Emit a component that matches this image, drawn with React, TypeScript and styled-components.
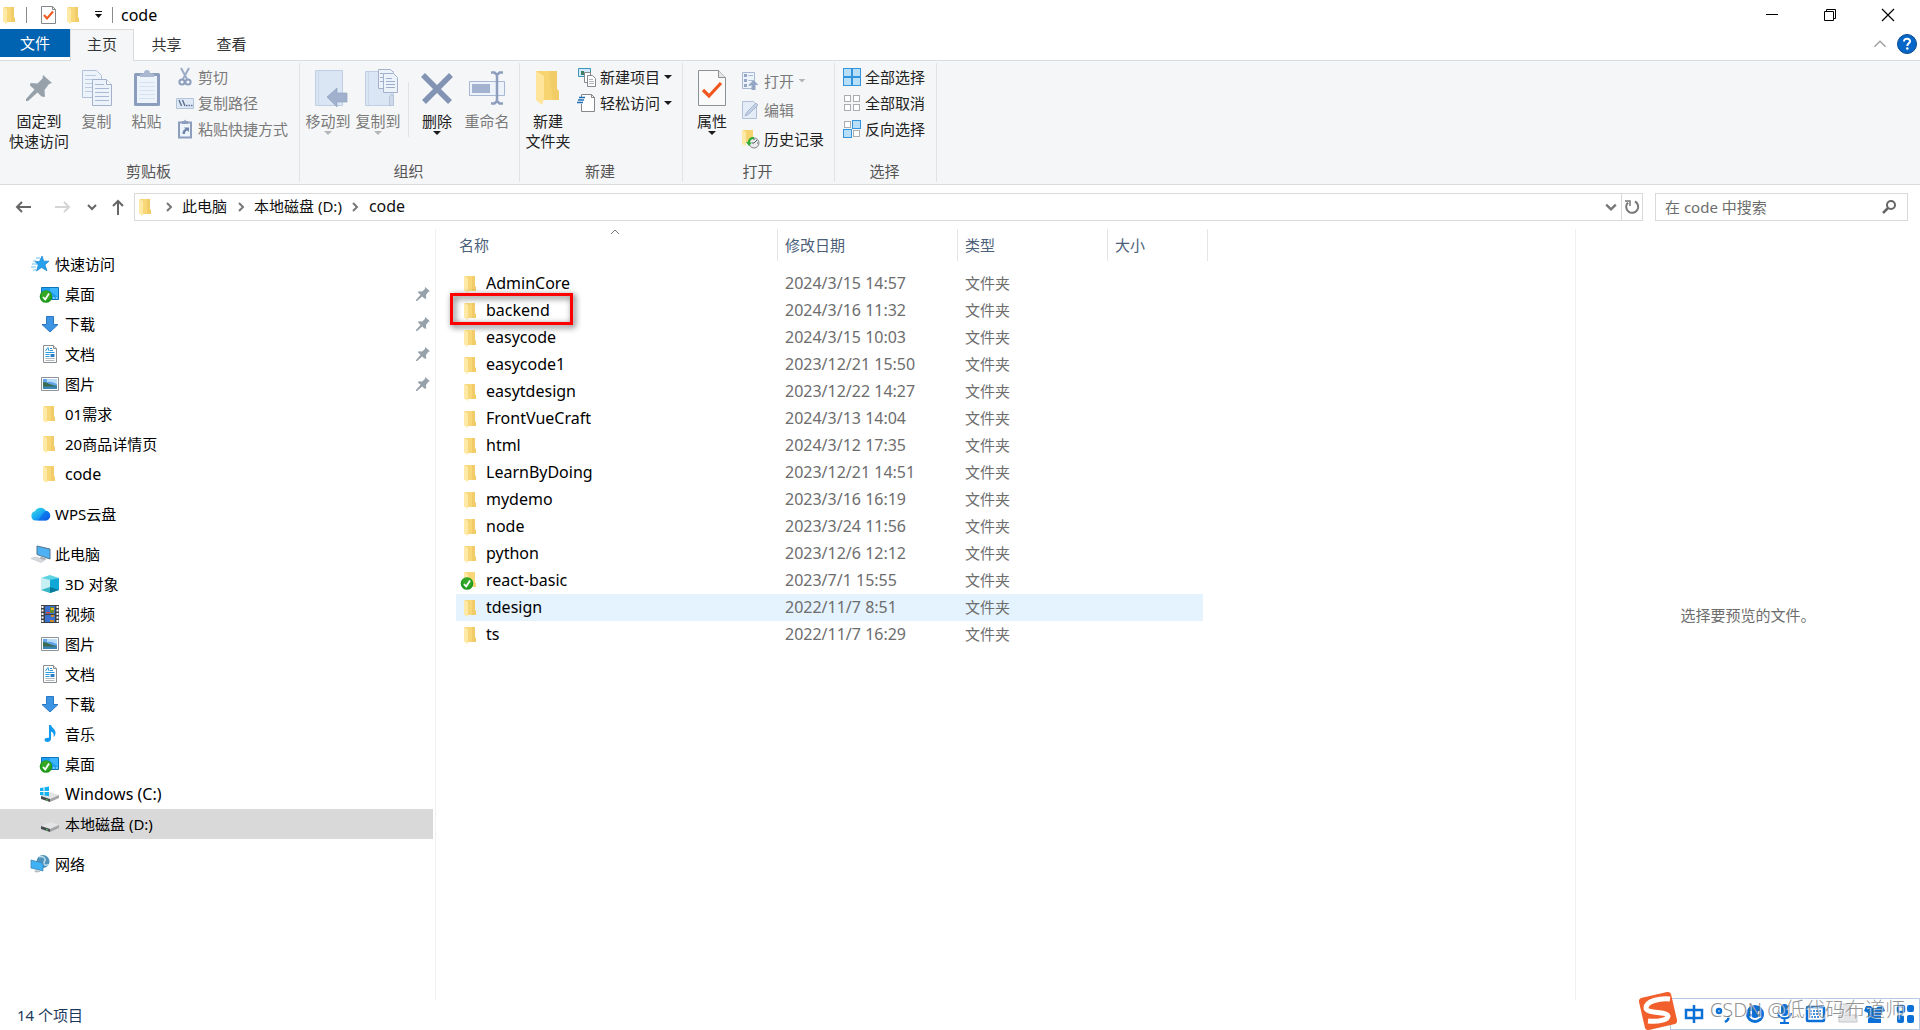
import React from "react";
import styled, { createGlobalStyle, css } from "styled-components";

const GlobalStyle = createGlobalStyle`
  * { box-sizing: border-box; }
  body {
    margin: 0;
    background: #fff;
    color: #000;
    font: 15px/20px "Noto Sans", "Noto Sans CJK SC", sans-serif;
  }
  button, input {
    font: inherit;
    color: inherit;
    margin: 0;
    padding: 0;
    border: 0;
    background: none;
  }
  svg { display: block; flex: none; overflow: visible; }
`;

/* ---------- icons ---------- */

type IconProps = { w?: number; h?: number };

const FolderIcon = () => (
  <svg width="18" height="18" viewBox="0 0 18 18">
    <path d="M3 1h10v10l1 1.500v3.500H5z" fill="#f8d779" />
    <path d="M10 1h3v10l1 1.500V16H10z" fill="#f2cc68" />
    <path d="M2 1l4 2v15L2 15.500z" fill="#ffe9a6" />
  </svg>
);

const CheckBadge = () => (
  <g>
    <circle cx="5" cy="11.500" r="6.300" fill="#1f9a1c" />
    <circle cx="5" cy="10.500" r="4.800" fill="#43b02f" opacity="0.600" />
    <path d="M2 12l2.200 2.600L8 8.500" fill="none" stroke="#fff" strokeWidth="1.800" />
  </g>
);

const SyncedFolderIcon = () => (
  <svg width="18" height="18" viewBox="0 0 18 18">
    <path d="M3 0h10v10l1 1.500V15H5z" fill="#f8d779" />
    <path d="M2 0l4 2v15L2 14.500z" fill="#ffe9a6" />
    <CheckBadge />
  </svg>
);

const DesktopIcon = () => (
  <svg width="18" height="18" viewBox="0 0 18 18">
    <path d="M.5 2.500h17v12H.5z" fill="#1e9df1" stroke="#0a74bd" />
    <path d="M9 3h8v9L9 6z" fill="#3db4ff" />
    <path d="M12 13h1.500M15 13h1.500" stroke="#fff" />
    <CheckBadge />
  </svg>
);

const DownloadIcon = () => (
  <svg width="18" height="18" viewBox="0 0 18 18">
    <path d="M5.500 1.500h7v8H17L9 17 1 9.500h4.500z" fill="#3d94e3" stroke="#2a78c4" />
  </svg>
);

const DocumentIcon = () => (
  <svg width="18" height="18" viewBox="0 0 18 18">
    <path d="M2.500.5h10l3 3v14h-13z" fill="#fff" stroke="#8b8f93" />
    <path d="M12.500.5v3h3" fill="#ddd" stroke="#8b8f93" />
    <path d="M4.500 6L7 2.500 8 6M9 3.500h2M9 5.500h3M4.500 7.500h9M4.500 9.500h4M4.500 11.500h4" fill="none" stroke="#2a98dc" />
    <path d="M9.500 9h4v3h-4z" fill="#2b7ec4" />
    <path d="M4.500 13.500h9M4.500 15.500h9" stroke="#b2b7bb" />
  </svg>
);

const PictureIcon = () => (
  <svg width="18" height="18" viewBox="0 0 18 18">
    <path d="M.5 2.500h17v13H.5z" fill="#fff" stroke="#8c9298" />
    <path d="M2 4h14v10H2z" fill="#5fa3ea" />
    <path d="M6 4h10v5c-4-1-5-3-10-2z" fill="#b8dcf7" />
    <path d="M2 7c4 0 7 3 14 4v1H2z" fill="#3d6b4f" />
    <path d="M2 11.500h14V14H2z" fill="#3a86b8" />
  </svg>
);

const StarIcon = () => (
  <svg width="18" height="18" viewBox="0 0 18 18">
    <path d="M11 1l1.800 5.200h5.200l-4 3.600 2 6L10.500 12.500 5.500 16l1.800-6L4 6.500h4.500z" fill="#27a1ee" stroke="#1682cc" strokeWidth="0.700" />
    <path d="M5 3h4M2 6h3M1 9h5M0 12h5M2 15h3" stroke="#6fc0f2" />
  </svg>
);

const CloudIcon = () => (
  <svg width="18" height="18" viewBox="0 0 18 18">
    <defs>
      <linearGradient id="cloudFill" x1="0" x2="1" y1="0" y2="1">
        <stop offset="0" stopColor="#3fe0d8" />
        <stop offset="0.500" stopColor="#18a8f5" />
        <stop offset="1" stopColor="#0a4fe0" />
      </linearGradient>
    </defs>
    <path d="M4.500 15.500a4.700 4.700 0 0 1-.6-9.200A6 6 0 0 1 14.500 5.500a5 5 0 0 1-.5 10z" fill="url(#cloudFill)" />
    <path d="M7 15.500c2-2 4-7 8-9.500a4.800 4.800 0 0 1-1 9.500z" fill="#0b62e6" opacity="0.600" />
  </svg>
);

const ComputerIcon = () => (
  <svg width="18" height="18" viewBox="0 0 18 18">
    <path d="M6 1l13 3v10L6 9.500z" fill="#4db1f3" stroke="#53758c" />
    <path d="M10 12l6 2-3 1-5-1.500z" fill="#9aa3ab" />
    <path d="M0 13.500l5-1.500 9 3-4 2.500z" fill="#d4d9dd" stroke="#b5bbc0" strokeWidth="0.500" />
  </svg>
);

const CubeIcon = () => (
  <svg width="18" height="18" viewBox="0 0 18 18">
    <path d="M9 0l9 3-9 3-9-3z" fill="#5fd3e2" />
    <path d="M0 3l9 2v13l-9-3z" fill="#c6f0f4" />
    <path d="M18 3L9 5v13l9-3z" fill="#0fa6d8" />
    <path d="M0 15l9-3v6z" fill="#3ab7c6" />
    <path d="M18 15l-9-3v6z" fill="#067a9b" />
  </svg>
);

const VideoIcon = () => (
  <svg width="18" height="18" viewBox="0 0 18 18">
    <path d="M0 0h18v18H0z" fill="#3d4043" />
    <path d="M1.500 1v17M16.500 1v17" stroke="#fff" strokeWidth="2" strokeDasharray="2 1.500" />
    <path d="M4 1h10v8H4zM4 10h10v7H4z" fill="#3a70cf" />
    <path d="M9 2h4v6H9z" fill="#6b8a2b" />
    <path d="M10 3h3v2h-3z" fill="#f1b52b" />
    <path d="M5 7h4v1.500H5z" fill="#d64a2f" />
    <path d="M10 10h3v2h-3zM9 15h4v2H9z" fill="#c98a2e" />
  </svg>
);

const MusicIcon = () => (
  <svg width="18" height="18" viewBox="0 0 18 18">
    <path d="M8 0h2c.5 3 5 4 4.500 8.500-.2 1.500-1 2.500-2 3.500.8-3-.5-5-2.500-5.500v7.500c0 2-2 3-3.800 3-1.700 0-2.700-1-2.700-2.200C3.500 13.500 5.500 12.500 8 12.800z" fill="#0f9af0" />
  </svg>
);

const DriveShape = () => (
  <g>
    <path d="M0 11l9-4 9 3-9 4z" fill="#e3e4e6" />
    <path d="M0 11l9 3v3l-9-3z" fill="#4a4d4f" />
    <path d="M9 14l9-4v3l-9 4z" fill="#a3a5a8" />
    <path d="M5 14l2 .7v1l-2-.7z" fill="#4fd05a" />
  </g>
);

const DriveIcon = () => (
  <svg width="18" height="18" viewBox="0 0 18 18">
    <DriveShape />
  </svg>
);

const SystemDriveIcon = () => (
  <svg width="18" height="18" viewBox="0 0 18 18">
    <DriveShape />
    <path d="M-1 3l3.500-.5V6H-1zM3.500 2.300L8 1.500V6H3.500zM-1 7h3.500v3.500L-1 10zM3.500 7H8v4.300l-4.500-.7z" fill="#16b1ef" />
  </svg>
);

const NetworkIcon = () => (
  <svg width="18" height="18" viewBox="0 0 18 18">
    <circle cx="12" cy="6.500" r="6.500" fill="#4f93ba" />
    <path d="M8 2c3-1 5 0 6 2s-2 3-1 5 4 1 4.500 0" fill="none" stroke="#bfe0ee" strokeWidth="1.500" />
    <path d="M0 5l12 3v8L0 13z" fill="#3fb1f5" stroke="#3a7ca8" strokeWidth="0.700" />
    <path d="M5 15l4 1v1l-4 .5-2-1z" fill="#b9c0c6" />
  </svg>
);

const PinIcon = ({ w = 14 }: IconProps) => (
  <svg width={w} height={w} viewBox="0 0 26 26">
    <path d="M17 0l9 8-3 1-4.500 6 .5 7-3.500-.5-4-4L2 26H0v-2l8.500-9.500L4 10.500 4.500 8l7 .5 5-5z" fill="#97a1aa" />
  </svg>
);

const PropertiesSmallIcon = () => (
  <svg width="16" height="18" viewBox="0 0 16 18">
    <path d="M.5.5h11l3 3v14H.5z" fill="#fff" stroke="#84888c" />
    <path d="M11.500.5v3h3" fill="none" stroke="#84888c" />
    <path d="M3 9l3 3.500L12 5.500" fill="none" stroke="#f0561d" strokeWidth="2" />
  </svg>
);

const CopyIcon = () => (
  <svg width="30" height="36" viewBox="0 0 30 36">
    <path d="M.5.5h14l5 5v22H.5z" fill="#edf3fb" stroke="#b1bfd8" />
    <path d="M3 5.500h11M3 9.500h14M3 13.500h7M3 17.500h7M3 21.500h7" stroke="#bccbe2" />
    <path d="M10.500 9.500h14l5 5v21h-19z" fill="#edf3fb" stroke="#a3b1cc" />
    <path d="M24.500 9.500v5h5" fill="#fff" stroke="#a3b1cc" />
    <path d="M13 14.500h9M13 18.500h14M13 22.500h14M13 26.500h14M13 30.500h14" stroke="#a9b9d4" />
  </svg>
);

const PasteIcon = () => (
  <svg width="26" height="38" viewBox="0 0 26 38">
    <rect x="0" y="4" width="26" height="33" rx="1.500" fill="#8d9dbd" />
    <path d="M3 7h20v27H3z" fill="#edf3fb" />
    <path d="M5 13.500h16M5 17.500h16M5 21.500h16M5 25.500h16M5 29.500h16" stroke="#d5e0f0" />
    <path d="M6 5l4-1a3 3 0 0 1 6 0l4 1v3H6z" fill="#a9b7d0" />
  </svg>
);

const CutIcon = () => (
  <svg width="18" height="18" viewBox="0 0 18 18">
    <path d="M5 0l6 11M13 0L7 11" stroke="#9aabc8" strokeWidth="2" />
    <circle cx="6" cy="14" r="2.600" fill="none" stroke="#8c9dbd" strokeWidth="2" />
    <circle cx="12" cy="14" r="2.600" fill="none" stroke="#8c9dbd" strokeWidth="2" />
  </svg>
);

const PathIcon = () => (
  <svg width="18" height="18" viewBox="0 0 18 18">
    <path d="M.5 4.500h17v10H.5z" fill="#dfe9f6" stroke="#b4c3dc" />
    <path d="M3 6l2.500 6M6.500 6L9 12" stroke="#5c6f92" strokeWidth="1.400" />
    <path d="M10 11.500h1.500M12.500 11.500H14M15 11.500h1.500" stroke="#5c6f92" strokeWidth="1.500" />
  </svg>
);

const PasteShortcutIcon = () => (
  <svg width="18" height="18" viewBox="0 0 18 18">
    <path d="M3 2.500h12v15H3z" fill="#edf3fb" stroke="#8d9dbd" strokeWidth="2" />
    <path d="M6 1h2l1-1.500L10 1h2v3H6z" fill="#8d9dbd" />
    <path d="M6.500 14c0-3 1-4.500 3-5L8 7.500h5V12l-1.500-1.500c-2 .5-2.500 1.500-2.500 3.500z" fill="#7186ad" />
  </svg>
);

const MoveToIcon = () => (
  <svg width="42" height="38" viewBox="-8 0 42 38">
    <path d="M.5 1.500h27v35H.5z" fill="#dbe6f4" stroke="#c0cee3" />
    <path d="M3.500 2v34" stroke="#cbd8ea" />
    <path d="M12 28l10-9v5h10v9H22v5z" fill="#a0b0cd" stroke="#92a3c3" strokeWidth="0.700" />
  </svg>
);

const CopyToIcon = () => (
  <svg width="42" height="38" viewBox="-8 0 42 38">
    <path d="M.5 2.500h28v34H.5z" fill="#dbe6f4" stroke="#c0cee3" />
    <path d="M3.500 3v33" stroke="#cbd8ea" />
    <path d="M13.500.5h12l3 3v16h-15z" fill="#edf3fb" stroke="#a3b1cc" />
    <path d="M18.500 4.500h10l4 4v15h-14z" fill="#edf3fb" stroke="#a3b1cc" />
    <path d="M21 9.500h6M21 12.500h9M21 15.500h9M21 18.500h9M15 4.500h3M15 8.500h3M15 12.500h3" stroke="#9dadca" />
    <path d="M24.500 28l2-3 2 3v8.500h-4z" fill="#cfdbeb" stroke="#b4c3dc" />
  </svg>
);

const DeleteIcon = () => (
  <svg width="32" height="32" viewBox="0 0 32 32">
    <path d="M2 3L29 30M30 3L3 30" stroke="#8293b4" strokeWidth="5.500" />
  </svg>
);

const RenameIcon = () => (
  <svg width="36" height="34" viewBox="0 0 36 34">
    <path d="M.5 10.500h35v14H.5z" fill="#edf3fb" stroke="#a9b8d2" />
    <path d="M3 13h18v9H3z" fill="#a3b2ce" />
    <path d="M22 1.500h3.500l2.500 2.500 2.500-2.500H34M28 3v28M22 32.500h3.500l2.500-2.500 2.500 2.500H34" fill="none" stroke="#8d9dbd" strokeWidth="2.500" />
  </svg>
);

const NewFolderIcon = () => (
  <svg width="26" height="36" viewBox="0 0 26 36">
    <path d="M1 1h21v18l2 2v9H6z" fill="#f7d470" />
    <path d="M14 1h8v18l2 2v9h-6z" fill="#edc45c" opacity="0.500" />
    <path d="M1 1l8 5v23l-2 6-6-5z" fill="#ffe49b" />
  </svg>
);

const NewItemIcon = () => (
  <svg width="18" height="18" viewBox="0 0 18 18">
    <path d="M.5.5h12v8H.5z" fill="#cfeafa" stroke="#3f93bf" />
    <path d="M3 3h3v4H3z" fill="#3f7f68" />
    <path d="M6.500 4.500h6v10h-6z" fill="#fff" stroke="#85898d" />
    <path d="M9.500 7.500h5l3 3v8h-8z" fill="#fff" stroke="#85898d" />
    <path d="M11 11.500h4M11 13.500h5M11 15.500h5" stroke="#b0b5ba" />
  </svg>
);

const EasyAccessIcon = () => (
  <svg width="18" height="18" viewBox="0 0 18 18">
    <path d="M3.500 3V.5h10l3 3v14h-13V10" fill="#fff" stroke="#85898d" />
    <path d="M13.500.5v3h3" fill="none" stroke="#85898d" />
    <path d="M1 3.500h6M0 6h6M-1 8.500h6" stroke="#1f6fb5" strokeWidth="1.500" />
  </svg>
);

const PropertiesIcon = () => (
  <svg width="28" height="36" viewBox="0 0 28 36">
    <path d="M.5.5h20l7 7v28H.5z" fill="#fafafa" stroke="#8d9195" />
    <path d="M20.500.5v7h7" fill="#e6e6e6" stroke="#8d9195" />
    <path d="M5 20l6 6L23 13" fill="none" stroke="#f0561d" strokeWidth="3.200" />
  </svg>
);

const OpenIcon = () => (
  <svg width="18" height="18" viewBox="0 0 18 18">
    <path d="M.5.500h12v16H.5z" fill="#edf3fb" stroke="#a9b8d2" />
    <path d="M2 2h3v3H2zM2 7h3v3H2zM2 12h3v3H2z" fill="#94a5c5" />
    <path d="M6.500 3.500H11M6.500 8.500H11M6.500 13.500H9" stroke="#a9b8d2" />
    <path d="M6.500 13L11.500 8l5 5h-3v5h-4v-5z" fill="#94a5c5" />
  </svg>
);

const EditIcon = () => (
  <svg width="18" height="18" viewBox="0 0 18 18">
    <path d="M.5.5h11l3 3v14H.5z" fill="#e4ecf7" stroke="#b1bfd8" />
    <path d="M3 15l2-4 9-9 2 2-9 9z" fill="#c3d0e4" stroke="#94a5c5" strokeWidth="0.700" />
  </svg>
);

const HistoryIcon = () => (
  <svg width="18" height="18" viewBox="0 0 18 18">
    <path d="M1 0h10v12H3z" fill="#f7d470" />
    <path d="M0 0l4 2v14l-4-2z" fill="#ffe9a6" />
    <circle cx="12" cy="13" r="5" fill="#e8eaec" stroke="#7f8488" />
    <path d="M12 13l3-3M12 13h-2M12 9v1M16 13h-1" stroke="#55595d" />
    <path d="M12 7c-4 0-6 2-6 5H4l3 4 3-3.500H8C8 10 9.500 9 12 9z" fill="#2faa35" />
  </svg>
);

const Tiles = ({ on }: { on: boolean[] }) => (
  <svg width="18" height="18" viewBox="0 0 18 18">
    {on.map((lit, i) => {
      const x = (i % 2) * 9;
      const y = Math.floor(i / 2) * 9;
      return lit ? (
        <rect key={i} x={x + 0.5} y={y + 0.5} width="8" height="8" fill="#b8dffa" stroke="#3294dc" />
      ) : (
        <rect key={i} x={x + 1.5} y={y + 1.5} width="6" height="6" fill="#fff" stroke="#a9adb1" />
      );
    })}
  </svg>
);

const Chevron = ({ dir, w = 10, color = "#777", weight = 2 }: { dir: "right" | "down" | "up"; w?: number; color?: string; weight?: number }) => {
  const shapes = { right: "M3 1l4 4-4 4", down: "M1 3l4 4 4-4", up: "M1 7l4-4 4 4" };
  return (
    <svg width={w} height={w} viewBox="0 0 10 10">
      <path d={shapes[dir]} fill="none" stroke={color} strokeWidth={weight} />
    </svg>
  );
};

const Arrow = ({ dir, color }: { dir: "left" | "right" | "up"; color: string }) => {
  const shapes = {
    left: "M16 8H2M7 3L2 8l5 5",
    right: "M0 8h14M9 3l5 5-5 5",
    up: "M8 16V2M3 7l5-5 5 5",
  };
  return (
    <svg width="16" height="16" viewBox="0 0 16 16">
      <path d={shapes[dir]} fill="none" stroke={color} strokeWidth="2" />
    </svg>
  );
};

/* ---------- shared pieces ---------- */

const Window = styled.div`
  display: flex;
  flex-direction: column;
  min-height: 100vh;
  position: relative;
`;

const Caret = styled.span<{ $dim?: boolean }>`
  width: 8px;
  height: 4px;
  background: ${(p) => (p.$dim ? "#b4b6b8" : "#1a1a1a")};
  clip-path: polygon(0 0, 100% 0, 50% 100%);
`;

/* ---------- title bar ---------- */

const TitleBar = styled.header`
  display: flex;
  align-items: center;
  height: 29px;
  padding-left: 1px;
`;

const QuickTools = styled.div`
  display: flex;
  align-items: center;
  gap: 7px;
`;

const ToolButton = styled.button<{ $w: number }>`
  display: flex;
  justify-content: center;
  align-items: center;
  width: ${(p) => p.$w}px;
  height: 20px;
`;

const TitleRule = styled.span`
  width: 1px;
  height: 16px;
  background: #8c8c8c;
`;

const WindowTitle = styled.h1`
  flex: 1;
  margin: 0;
  padding-left: 8px;
  font-size: 16px;
  font-weight: 400;
  line-height: 24px;
`;

const WindowButtons = styled.div`
  display: flex;
  padding-right: 3px;
`;

const WindowButton = styled.button`
  display: flex;
  justify-content: center;
  align-items: center;
  width: 58px;
  height: 28px;
`;

/* ---------- ribbon ---------- */

const Tabs = styled.nav`
  display: flex;
  height: 32px;
  border-bottom: 1px solid #dadbdc;
`;

const Tab = styled.button<{ $kind?: "file" | "active" }>`
  width: 65px;
  height: 29px;
  color: #333;
  ${(p) =>
    p.$kind === "file" &&
    css`
      width: 70px;
      height: 28px;
      background: #0063b1;
      color: #fff;
    `}
  ${(p) =>
    p.$kind === "active" &&
    css`
      width: 64px;
      height: 32px;
      padding-bottom: 3px;
      background: #f5f6f7;
      border: 1px solid #dadbdc;
      border-bottom: 0;
    `}
`;

const TabsEnd = styled.div`
  display: flex;
  align-items: center;
  gap: 10px;
  margin-left: auto;
  padding: 0 3px 1px 0;
`;

const RibbonBar = styled.section`
  display: flex;
  height: 124px;
  background: #f5f6f7;
  border-bottom: 1px solid #dadbdc;
  color: #333;
`;

const Group = styled.div<{ $pad: number; $w: number }>`
  display: flex;
  flex-direction: column;
  justify-content: space-between;
  width: ${(p) => p.$w}px;
  margin: 2px 0;
  padding: 1px 0 1px ${(p) => p.$pad}px;
  border-right: 1px solid #e2e3e4;
`;

const GroupBody = styled.div`
  display: flex;
`;

const GroupName = styled.div<{ $pad: number }>`
  margin-left: -${(p) => p.$pad}px;
  padding-right: 2px;
  text-align: center;
  color: #555;
`;

const BigButton = styled.button<{ $w: number }>`
  display: flex;
  flex-direction: column;
  align-items: center;
  width: ${(p) => p.$w}px;
  white-space: nowrap;
  color: #222;
  &:disabled { color: #7a7a7a; }
`;

const BigIcon = styled.span`
  display: flex;
  align-items: center;
  height: 47px;
`;

const SmallColumn = styled.div<{ $pad: number; $row: number; $top?: number }>`
  display: grid;
  grid-auto-rows: ${(p) => p.$row}px;
  align-content: start;
  padding: ${(p) => p.$top ?? 0}px 0 0 ${(p) => p.$pad}px;
`;

const SmallButton = styled.button`
  display: flex;
  align-items: center;
  gap: 4px;
  color: #222;
  white-space: nowrap;
  &:disabled { color: #7a7a7a; }
`;

const InnerRule = styled.span`
  width: 1px;
  height: 55px;
  margin: 18px 5px 0;
  background: #e2e3e4;
`;

type BigProps = { w: number; icon: React.ReactNode; lines: string[]; off?: boolean; caret?: boolean };

const Big = ({ w, icon, lines, off, caret }: BigProps) => (
  <BigButton $w={w} disabled={off}>
    <BigIcon>{icon}</BigIcon>
    {lines.map((l) => (
      <span key={l}>{l}</span>
    ))}
    {caret && <Caret $dim={off} />}
  </BigButton>
);

type SmallProps = { icon: React.ReactNode; label: string; off?: boolean; caret?: boolean };

const Small = ({ icon, label, off, caret }: SmallProps) => (
  <SmallButton disabled={off}>
    {icon}
    <span>{label}</span>
    {caret && <Caret $dim={off} />}
  </SmallButton>
);

const RibbonGroup = ({ name, pad, w, children }: { name: string; pad: number; w: number; children: React.ReactNode }) => (
  <Group $pad={pad} $w={w}>
    <GroupBody>{children}</GroupBody>
    <GroupName $pad={pad}>{name}</GroupName>
  </Group>
);

/* ---------- address row ---------- */

const NavRow = styled.div`
  display: flex;
  align-items: center;
  height: 44px;
  padding: 0 12px 1px 15px;
`;

const NavButtons = styled.div`
  display: grid;
  grid-template-columns: 40px 32px 23px 24px;
  align-items: center;
`;

const NavButton = styled.button`
  justify-self: start;
  display: flex;
  align-items: center;
  height: 24px;
`;

const AddressBox = styled.div`
  display: flex;
  flex: 1;
  align-items: center;
  height: 28px;
  padding-left: 2px;
  border: 1px solid #d9d9d9;
`;

const Crumbs = styled.div`
  display: flex;
  flex: 1;
  align-items: center;
`;

const Crumb = styled.a<{ $latin?: boolean }>`
  padding-bottom: 1px;
  color: #111;
  font-size: ${(p) => (p.$latin ? 16 : 15)}px;
  text-decoration: none;
  line-height: 24px;
`;

const CrumbGap = styled.span`
  display: flex;
  justify-content: center;
  width: 27px;
`;

const AddressButton = styled.button<{ $line?: boolean }>`
  display: flex;
  align-items: center;
  justify-content: center;
  width: 21px;
  height: 26px;
  border-left: ${(p) => (p.$line ? "1px solid #d9d9d9" : "0")};
`;

const SearchBox = styled.label`
  display: flex;
  align-items: center;
  width: 253px;
  height: 28px;
  margin-left: 12px;
  padding: 0 11px 0 9px;
  border: 1px solid #d9d9d9;
`;

const SearchInput = styled.input`
  flex: 1;
  min-width: 0;
  outline: 0;
  &::placeholder { color: #6d6d6d; opacity: 1; }
`;

/* ---------- body ---------- */

const Body = styled.div`
  display: flex;
  flex: 1;
`;

const Sidebar = styled.nav`
  display: flex;
  flex-direction: column;
  gap: 10px;
  width: 436px;
  padding: 20px 2px 0 0;
  border-right: 1px solid #f0f0f0;
`;

const Tree = styled.ul`
  margin: 0;
  padding: 0;
  list-style: none;
`;

const TreeLink = styled.a<{ $level: 1 | 2; $selected?: boolean }>`
  display: flex;
  align-items: center;
  gap: 6px;
  height: 30px;
  padding: 0 3px 0 ${(p) => (p.$level === 1 ? 31 : 41)}px;
  background: ${(p) => (p.$selected ? "#d9d9d9" : "transparent")};
  color: #000;
  text-decoration: none;
`;

const TreeText = styled.span<{ $latin: boolean }>`
  flex: 1;
  font-size: ${(p) => (p.$latin ? 16 : 15)}px;
`;

const Files = styled.main`
  flex: 1;
  padding-left: 20px;
`;

const FileTable = styled.table`
  width: 752px;
  table-layout: fixed;
  border-collapse: separate;
  border-spacing: 0;
  text-align: left;
`;

const HeadCell = styled.th<{ $w: number; $pad?: number }>`
  position: relative;
  width: ${(p) => p.$w}px;
  height: 32px;
  padding: 0 0 0 ${(p) => p.$pad ?? 7}px;
  border-right: 1px solid #e5e5e5;
  color: #4c607a;
  font-weight: 400;
`;

const SortMark = styled.span`
  position: absolute;
  top: -2px;
  left: 154px;
`;

const Spacer = styled.tbody`
  td { height: 9px; padding: 0; }
`;

const FileRow = styled.tr<{ $hover?: boolean }>`
  background: ${(p) => (p.$hover ? "#e5f3ff" : "transparent")};
  td:last-child {
    border-right: 5px solid #fff;
  }
`;

const Cell = styled.td<{ $size?: number }>`
  height: 27px;
  padding: 0 0 0 7px;
  color: #6d6d6d;
  font-size: ${(p) => p.$size ?? 15}px;
  line-height: 27px;
`;

const NameCell = styled(Cell)`
  position: relative;
  padding-left: 6px;
  color: #000;
`;

const NameFlex = styled.div`
  display: flex;
  align-items: center;
  gap: 6px;
`;

const Highlight = styled.span`
  position: absolute;
  top: -4px;
  left: -6px;
  width: 123px;
  height: 32px;
  border: 3px solid #f00;
  filter: drop-shadow(2px 2px 3px rgba(0, 0, 0, 0.7));
`;

const Preview = styled.aside`
  display: flex;
  align-items: center;
  justify-content: center;
  width: 345px;
  border-left: 1px solid #f0f0f0;
  color: #6d6d6d;
`;

const StatusBar = styled.footer`
  height: 30px;
  padding-left: 17px;
  color: #1e395b;
  line-height: 30px;
`;

/* ---------- input-method bar ---------- */

const ImeBar = styled.div`
  position: absolute;
  right: 0;
  bottom: 0;
  display: flex;
  align-items: center;
  width: 250px;
  height: 32px;
  padding-left: 11px;
  border: 1px solid #b4cbe6;
  background: #fff;
`;

const ImeLogo = styled.span`
  position: absolute;
  left: -33px;
  bottom: -1px;
`;

const Watermark = styled.span`
  position: absolute;
  right: 14px;
  top: -3px;
  color: rgba(120, 120, 120, 0.8);
  font-size: 20px;
  font-weight: 300;
  line-height: 28px;
  text-shadow: 1px 1px 0 rgba(255, 255, 255, 0.7);
  white-space: nowrap;
`;

const ImeIcons = () => (
  <svg width="232" height="20" viewBox="0 0 232 20" fill="none" stroke="#0a6fd6" strokeWidth="2.500">
    <path d="M4 6h16v8H4zM12 1v18" />
    <circle cx="37" cy="7" r="2" />
    <path d="M46 12c1 3 0 4-3 6" />
    <circle cx="73" cy="10" r="9" fill="#0a6fd6" stroke="none" />
    <path d="M69 7v3M77 7v3M68 12c2 4 8 4 10 0" stroke="#fff" strokeWidth="1.800" />
    <rect x="99" y="0" width="7" height="12" rx="3.500" fill="#0a6fd6" stroke="none" />
    <path d="M96 9c0 7 13 7 13 0M102.500 15v4M98 19h9" strokeWidth="2" />
    <rect x="125" y="3" width="17" height="14" rx="1" />
    <path d="M128 7h11M128 10h11M129 13h9" strokeWidth="1.500" strokeDasharray="2 1" />
    <path d="M158 0h10v9h-10zM157 11h18v7h-18z" stroke="#c3c6ca" fill="#e3e5e7" strokeWidth="1" />
    <path d="M184 2h5c1 3 6 3 7 0h5l2 5-4 2v10h-13V9l-4-2z" fill="#0a6fd6" stroke="none" />
    <rect x="216" y="2" width="6" height="6" rx="1.500" />
    <rect x="225" y="1" width="7" height="7" rx="2" fill="#0a6fd6" stroke="none" />
    <rect x="215" y="11" width="7" height="8" rx="2" fill="#0a6fd6" stroke="none" />
    <rect x="225" y="11" width="7" height="8" rx="2" fill="#0a6fd6" stroke="none" />
  </svg>
);

/* ---------- data ---------- */

type Node = { icon: React.ReactNode; text: string; pin?: boolean; selected?: boolean };

const tree: { head: Node; items: Node[] }[] = [
  {
    head: { icon: <StarIcon />, text: "快速访问" },
    items: [
      { icon: <DesktopIcon />, text: "桌面", pin: true },
      { icon: <DownloadIcon />, text: "下载", pin: true },
      { icon: <DocumentIcon />, text: "文档", pin: true },
      { icon: <PictureIcon />, text: "图片", pin: true },
      { icon: <FolderIcon />, text: "01需求" },
      { icon: <FolderIcon />, text: "20商品详情页" },
      { icon: <FolderIcon />, text: "code" },
    ],
  },
  { head: { icon: <CloudIcon />, text: "WPS云盘" }, items: [] },
  {
    head: { icon: <ComputerIcon />, text: "此电脑" },
    items: [
      { icon: <CubeIcon />, text: "3D 对象" },
      { icon: <VideoIcon />, text: "视频" },
      { icon: <PictureIcon />, text: "图片" },
      { icon: <DocumentIcon />, text: "文档" },
      { icon: <DownloadIcon />, text: "下载" },
      { icon: <MusicIcon />, text: "音乐" },
      { icon: <DesktopIcon />, text: "桌面" },
      { icon: <SystemDriveIcon />, text: "Windows (C:)" },
      { icon: <DriveIcon />, text: "本地磁盘 (D:)", selected: true },
    ],
  },
  { head: { icon: <NetworkIcon />, text: "网络" }, items: [] },
];

const files: [string, string][] = [
  ["AdminCore", "2024/3/15 14:57"],
  ["backend", "2024/3/16 11:32"],
  ["easycode", "2024/3/15 10:03"],
  ["easycode1", "2023/12/21 15:50"],
  ["easytdesign", "2023/12/22 14:27"],
  ["FrontVueCraft", "2024/3/13 14:04"],
  ["html", "2024/3/12 17:35"],
  ["LearnByDoing", "2023/12/21 14:51"],
  ["mydemo", "2023/3/16 16:19"],
  ["node", "2023/3/24 11:56"],
  ["python", "2023/12/6 12:12"],
  ["react-basic", "2023/7/1 15:55"],
  ["tdesign", "2022/11/7 8:51"],
  ["ts", "2022/11/7 16:29"],
];

const isLatin = (s: string) => /^[\w\s():-]+$/.test(s);

const TreeItem = ({ node, level }: { node: Node; level: 1 | 2 }) => (
  <li>
    <TreeLink href="#" $level={level} $selected={node.selected}>
      {node.icon}
      <TreeText $latin={isLatin(node.text)}>{node.text}</TreeText>
      {node.pin && <PinIcon />}
    </TreeLink>
  </li>
);

export default function App() {
  return (
    <Window>
      <GlobalStyle />
      <TitleBar>
        <QuickTools>
          <FolderIcon />
          <TitleRule />
          <ToolButton $w={30} aria-label="属性"><PropertiesSmallIcon /></ToolButton>
        </QuickTools>
        <QuickTools>
          <ToolButton $w={20} aria-label="新建文件夹"><FolderIcon /></ToolButton>
          <ToolButton $w={14} aria-label="自定义">
            <svg width="7" height="7" viewBox="0 0 7 7"><path d="M0 0h7v1H0zM0 3h7L3.500 7z" fill="#111" /></svg>
          </ToolButton>
          <TitleRule />
        </QuickTools>
        <WindowTitle>code</WindowTitle>
        <WindowButtons>
          <WindowButton aria-label="最小化">
            <svg width="12" height="12" viewBox="0 0 12 12"><path d="M0 5.500h12" stroke="#000" /></svg>
          </WindowButton>
          <WindowButton aria-label="还原">
            <svg width="12" height="12" viewBox="0 0 12 12" fill="none" stroke="#000"><path d="M.5 2.500h9v9h-9zM2.500 2.500v-2h9v9h-2" /></svg>
          </WindowButton>
          <WindowButton aria-label="关闭">
            <svg width="12" height="12" viewBox="0 0 12 12"><path d="M0 0l12 12M12 0L0 12" stroke="#000" strokeWidth="1.200" /></svg>
          </WindowButton>
        </WindowButtons>
      </TitleBar>

      <Tabs>
        <Tab $kind="file">文件</Tab>
        <Tab $kind="active">主页</Tab>
        <Tab>共享</Tab>
        <Tab>查看</Tab>
        <TabsEnd>
          <Chevron dir="up" w={14} color="#a0a0a0" weight={1} />
          <svg width="20" height="20" viewBox="0 0 20 20">
            <circle cx="10" cy="10" r="9.500" fill="#0667c8" stroke="#0b4a8c" />
            <path d="M7 7.500c0-4 6.500-3.500 6 0-.3 1.800-2.700 2-2.700 4.500" fill="none" stroke="#fff" strokeWidth="2" />
            <circle cx="10.300" cy="14.500" r="1.300" fill="#fff" />
          </svg>
        </TabsEnd>
      </Tabs>

      <RibbonBar>
        <RibbonGroup name="剪贴板" pad={4} w={300}>
          <Big w={70} icon={<PinIcon w={26} />} lines={["固定到", "快速访问"]} />
          <Big w={45} icon={<CopyIcon />} lines={["复制"]} off />
          <Big w={55} icon={<PasteIcon />} lines={["粘贴"]} off />
          <SmallColumn $pad={2} $row={26}>
            <Small icon={<CutIcon />} label="剪切" off />
            <Small icon={<PathIcon />} label="复制路径" off />
            <Small icon={<PasteShortcutIcon />} label="粘贴快捷方式" off />
          </SmallColumn>
        </RibbonGroup>
        <RibbonGroup name="组织" pad={3} w={220}>
          <Big w={50} icon={<MoveToIcon />} lines={["移动到"]} off caret />
          <Big w={50} icon={<CopyToIcon />} lines={["复制到"]} off caret />
          <InnerRule />
          <Big w={46} icon={<DeleteIcon />} lines={["删除"]} caret />
          <Big w={54} icon={<RenameIcon />} lines={["重命名"]} off />
        </RibbonGroup>
        <RibbonGroup name="新建" pad={1} w={163}>
          <Big w={54} icon={<NewFolderIcon />} lines={["新建", "文件夹"]} />
          <SmallColumn $pad={3} $row={26}>
            <Small icon={<NewItemIcon />} label="新建项目" caret />
            <Small icon={<EasyAccessIcon />} label="轻松访问" caret />
          </SmallColumn>
        </RibbonGroup>
        <RibbonGroup name="打开" pad={3} w={152}>
          <Big w={52} icon={<PropertiesIcon />} lines={["属性"]} caret />
          <SmallColumn $pad={4} $row={29} $top={2}>
            <Small icon={<OpenIcon />} label="打开" off caret />
            <Small icon={<EditIcon />} label="编辑" off />
            <Small icon={<HistoryIcon />} label="历史记录" />
          </SmallColumn>
        </RibbonGroup>
        <RibbonGroup name="选择" pad={0} w={102}>
          <SmallColumn $pad={8} $row={26}>
            <Small icon={<Tiles on={[true, true, true, true]} />} label="全部选择" />
            <Small icon={<Tiles on={[false, false, false, false]} />} label="全部取消" />
            <Small icon={<Tiles on={[false, true, true, false]} />} label="反向选择" />
          </SmallColumn>
        </RibbonGroup>
      </RibbonBar>

      <NavRow>
        <NavButtons>
          <NavButton aria-label="后退"><Arrow dir="left" color="#666" /></NavButton>
          <NavButton aria-label="前进" disabled><Arrow dir="right" color="#d5d5d5" /></NavButton>
          <NavButton aria-label="最近位置"><Chevron dir="down" color="#666" /></NavButton>
          <NavButton aria-label="向上"><Arrow dir="up" color="#666" /></NavButton>
        </NavButtons>
        <AddressBox>
          <Crumbs>
            <FolderIcon />
            <CrumbGap><Chevron dir="right" /></CrumbGap>
            <Crumb href="#">此电脑</Crumb>
            <CrumbGap><Chevron dir="right" /></CrumbGap>
            <Crumb href="#">本地磁盘 (D:)</Crumb>
            <CrumbGap><Chevron dir="right" /></CrumbGap>
            <Crumb href="#" $latin>code</Crumb>
          </Crumbs>
          <AddressButton aria-label="历史位置"><Chevron dir="down" w={12} /></AddressButton>
          <AddressButton $line aria-label="刷新">
            <svg width="14" height="14" viewBox="0 0 14 14">
              <path d="M10 1.500A6 6 0 1 1 3 2.500" fill="none" stroke="#777" strokeWidth="2" />
              <path d="M0 1h5v5" fill="none" stroke="#777" strokeWidth="1.500" />
            </svg>
          </AddressButton>
        </AddressBox>
        <SearchBox>
          <SearchInput type="text" aria-label="搜索" placeholder="在 code 中搜索" />
          <svg width="14" height="14" viewBox="0 0 14 14" fill="none" stroke="#666" strokeWidth="2">
            <circle cx="9" cy="5" r="4" />
            <path d="M6 8L1 13" strokeWidth="2.500" />
          </svg>
        </SearchBox>
      </NavRow>

      <Body>
        <Sidebar>
          {tree.map(({ head, items }) => (
            <Tree key={head.text}>
              <TreeItem node={head} level={1} />
              {items.map((n) => (
                <TreeItem key={n.text} node={n} level={2} />
              ))}
            </Tree>
          ))}
        </Sidebar>
        <Files>
          <FileTable>
            <thead>
              <tr>
                <HeadCell $w={322} $pad={3}>
                  名称
                  <SortMark><Chevron dir="up" color="#777" weight={1} /></SortMark>
                </HeadCell>
                <HeadCell $w={180}>修改日期</HeadCell>
                <HeadCell $w={150}>类型</HeadCell>
                <HeadCell $w={100}>大小</HeadCell>
              </tr>
            </thead>
            <Spacer><tr><td colSpan={4} /></tr></Spacer>
            <tbody>
              {files.map(([name, date]) => (
                <FileRow key={name} $hover={name === "tdesign"}>
                  <NameCell $size={16}>
                    <NameFlex>
                      {name === "react-basic" ? <SyncedFolderIcon /> : <FolderIcon />}
                      {name}
                    </NameFlex>
                    {name === "backend" && <Highlight />}
                  </NameCell>
                  <Cell $size={16}>{date}</Cell>
                  <Cell>文件夹</Cell>
                  <Cell />
                </FileRow>
              ))}
            </tbody>
          </FileTable>
        </Files>
        <Preview>选择要预览的文件。</Preview>
      </Body>

      <StatusBar>14 个项目</StatusBar>

      <ImeBar>
        <ImeLogo>
          <svg width="40" height="38" viewBox="0 0 40 38">
            <path d="M3 6L29 0q3-.5 4 2l6 26q.5 3-2 4L11 38q-3 .5-4-2L1 10q-.5-3 2-4z" fill="#f1602c" />
            <path d="M32 7C22 6 8 9 8 16c0 6 21 3 22 8 0 4-10 6-20 5" fill="none" stroke="#fff" strokeWidth="5" />
          </svg>
        </ImeLogo>
        <ImeIcons />
        <Watermark>CSDN @低代码布道师</Watermark>
      </ImeBar>
    </Window>
  );
}
